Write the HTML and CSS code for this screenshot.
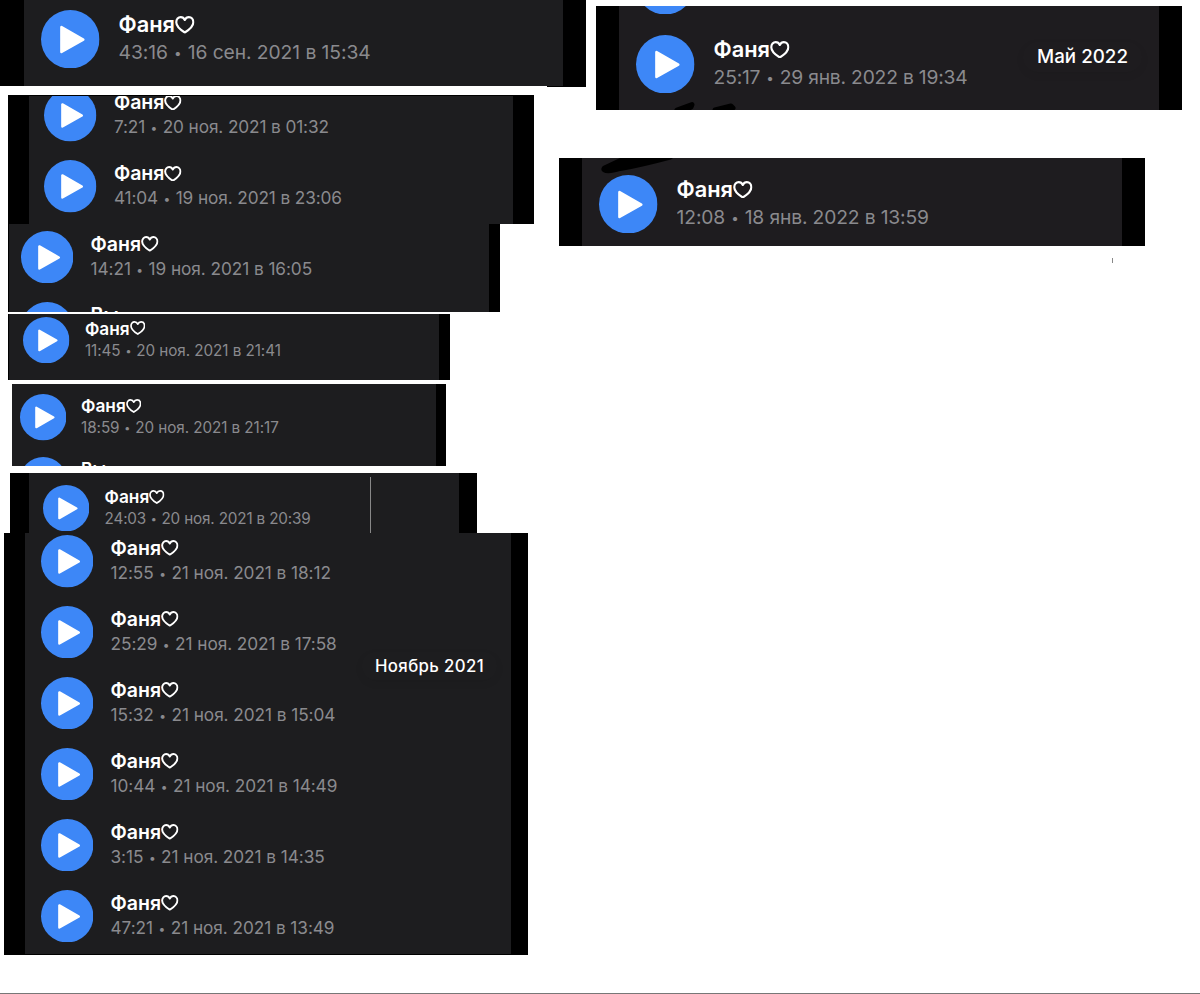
FILE: index.html
```
<!DOCTYPE html>
<html lang="ru">
<head>
    <meta charset="UTF-8">
    <title>Голосовые сообщения</title>
    <link rel="stylesheet" href="styles.css">
</head>
<body>
<svg class="defs">
    <symbol id="play" viewBox="0 0 58 58">
        <circle cx="29" cy="29" r="29" fill="#3d87f7"/>
        <path d="M20.3 17v24.6L41.9 29.3z" fill="#fff" stroke="#fff" stroke-width="2.6" stroke-linejoin="round"/>
    </symbol>
    <symbol id="heart" viewBox="0 0 20 18">
        <path d="M10 16.8C6.5 14.6 1.3 11 1.3 6.3 1.3 3.3 3.3 1.2 5.8 1.2 7.7 1.2 9.2 2.3 10 4 10.8 2.3 12.3 1.2 14.2 1.2 16.7 1.2 18.7 3.3 18.7 6.3 18.7 11 13.5 14.6 10 16.8z" fill="none" stroke="#fff" stroke-width="2.2" stroke-linejoin="round"/>
    </symbol>
</svg>
<div class="col left">
    <div class="panel big sep16">
        <ul>
            <li><svg class="play"><use href="#play"/></svg><div><h3>Фаня<svg class="heart"><use href="#heart"/></svg></h3><p>43:16 <i>•</i> 16 сен. 2021 в 15:34</p></div></li>
        </ul>
    </div>
    <div class="edge"></div>
    <div class="panel mid nov19">
        <ul>
            <li><svg class="play"><use href="#play"/></svg><div><h3>Фаня<svg class="heart"><use href="#heart"/></svg></h3><p>7:21 <i>•</i> 20 ноя. 2021 в 01:32</p></div></li>
            <li><svg class="play"><use href="#play"/></svg><div><h3>Фаня<svg class="heart"><use href="#heart"/></svg></h3><p>41:04 <i>•</i> 19 ноя. 2021 в 23:06</p></div></li>
        </ul>
    </div>
    <div class="panel mid nov19b">
        <ul>
            <li><svg class="play"><use href="#play"/></svg><div><h3>Фаня<svg class="heart"><use href="#heart"/></svg></h3><p>14:21 <i>•</i> 19 ноя. 2021 в 16:05</p></div></li>
            <li><svg class="play"><use href="#play"/></svg><div><h3>Вы</h3><p></p></div></li>
        </ul>
    </div>
    <div class="panel small nov20">
        <ul>
            <li><svg class="play"><use href="#play"/></svg><div><h3>Фаня<svg class="heart"><use href="#heart"/></svg></h3><p>11:45 <i>•</i> 20 ноя. 2021 в 21:41</p></div></li>
            <li><svg class="play"><use href="#play"/></svg></li>
        </ul>
    </div>
    <div class="panel small nov20b">
        <ul>
            <li><svg class="play"><use href="#play"/></svg><div><h3>Фаня<svg class="heart"><use href="#heart"/></svg></h3><p>18:59 <i>•</i> 20 ноя. 2021 в 21:17</p></div></li>
            <li><svg class="play"><use href="#play"/></svg><div><h3>Вы</h3><p></p></div></li>
        </ul>
    </div>
    <div class="panel small nov20c">
        <ul>
            <li><svg class="play"><use href="#play"/></svg><div><h3>Фаня<svg class="heart"><use href="#heart"/></svg></h3><p>24:03 <i>•</i> 20 ноя. 2021 в 20:39</p></div></li>
        </ul>
        <div class="rule"></div>
    </div>
    <div class="panel mid nov21">
        <ul>
            <li><svg class="play"><use href="#play"/></svg><div><h3>Фаня<svg class="heart"><use href="#heart"/></svg></h3><p>12:55 <i>•</i> 21 ноя. 2021 в 18:12</p></div></li>
            <li><svg class="play"><use href="#play"/></svg><div><h3>Фаня<svg class="heart"><use href="#heart"/></svg></h3><p>25:29 <i>•</i> 21 ноя. 2021 в 17:58</p></div></li>
            <li><svg class="play"><use href="#play"/></svg><div><h3>Фаня<svg class="heart"><use href="#heart"/></svg></h3><p>15:32 <i>•</i> 21 ноя. 2021 в 15:04</p></div></li>
            <li><svg class="play"><use href="#play"/></svg><div><h3>Фаня<svg class="heart"><use href="#heart"/></svg></h3><p>10:44 <i>•</i> 21 ноя. 2021 в 14:49</p></div></li>
            <li><svg class="play"><use href="#play"/></svg><div><h3>Фаня<svg class="heart"><use href="#heart"/></svg></h3><p>3:15 <i>•</i> 21 ноя. 2021 в 14:35</p></div></li>
            <li><svg class="play"><use href="#play"/></svg><div><h3>Фаня<svg class="heart"><use href="#heart"/></svg></h3><p>47:21 <i>•</i> 21 ноя. 2021 в 13:49</p></div></li>
        </ul>
        <span class="month">Ноябрь 2021</span>
        <div class="bar"></div>
    </div>
</div>
<div class="col">
    <div class="panel big jan29">
        <ul>
            <li><svg class="play"><use href="#play"/></svg></li>
            <li><svg class="play"><use href="#play"/></svg><div><h3>Фаня<svg class="heart"><use href="#heart"/></svg></h3><p>25:17 <i>•</i> 29 янв. 2022 в 19:34</p></div></li>
        </ul>
        <svg class="pen" viewBox="0 0 90 10"><path d="M8 10L23 4.500L22 7L10 13zM46 10L62 6L64 8L52 12z" fill="#000" stroke="#000" stroke-width="5" stroke-linejoin="round"/></svg>
        <span class="month">Май 2022</span>
        <div class="bar"></div>
    </div>
    <div class="panel big jan18">
        <svg class="pen" viewBox="0 0 90 16"><path d="M5 11L24 2V-2H70Q40 6 20 9.500Q8 13 5 11z" fill="#000" stroke="#000" stroke-width="7" stroke-linejoin="round"/></svg>
        <ul>
            <li><svg class="play"><use href="#play"/></svg><div><h3>Фаня<svg class="heart"><use href="#heart"/></svg></h3><p>12:08 <i>•</i> 18 янв. 2022 в 13:59</p></div></li>
        </ul>
    </div>
    <div class="tick"></div>
</div>
</body>
</html>
```
FILE: styles.css
```
body,div,ul,li,h3,p{margin:0;padding:0;box-sizing:border-box;}
ul{list-style-type:none;}
body{display:flex;height:994px;overflow:hidden;background:#fff;border-bottom:1px solid #777;font-family:Inter,"Noto Sans",sans-serif;}
.defs{position:absolute;width:0;height:0;}
.left{width:596px;flex:none;}

/* all row sizes are in em, the panel sets the scale */
.panel{position:relative;overflow:hidden;background:#1d1d1f;border:0 solid #000;}
.big{font-size:20px;}
.mid{font-size:17.92px;}
.small{font-size:15.87px;}
.panel li{display:flex;align-items:center;height:3.962em;gap:.955em;}
.play{display:block;width:2.925em;height:2.925em;flex:none;}
.panel h3{display:flex;align-items:center;height:1.223em;padding-bottom:.13em;font-size:1.09em;font-weight:600;color:#fff;white-space:nowrap;}
.panel p{height:1.385em;line-height:1.385em;font-size:.963em;letter-spacing:-.07px;color:#8a8a8e;white-space:nowrap;}
.panel p i{font-style:normal;font-size:.7em;line-height:1;margin:0 .06em;vertical-align:.1em;}
.heart{width:.9em;height:.81em;margin:.03em 0 0 0;}

.sep16{width:586px;height:86px;border-width:0 23px 0 24px;padding-left:17px;}
.sep16 ul{margin-top:-.4px;}
.edge{width:39px;height:1px;margin-left:547px;background:#000;}
.nov19{width:526px;height:129px;margin:8px 0 0 8px;border-width:1px 21px 0 21px;padding-left:15.4px;}
.nov19 ul{margin-top:-16px;}
.nov19 p{letter-spacing:-.12px;}
.nov19b{width:492px;height:88px;margin-left:8px;border-width:0 11px 0 1px;padding-left:12px;}
.nov19b ul{margin-top:-2.4px;}
.nov20{width:442px;height:66px;margin:2px 0 0 8px;border-width:0 11px 0 1px;padding-left:14.4px;}
.nov20 ul{margin-top:-5.6px;}
.nov20b{width:434px;height:82px;margin:4px 0 0 12px;border-width:0 10px 0 0;padding-left:7.5px;}
.nov20b ul{margin-top:2px;}
.nov20c{width:467px;height:60px;margin:7px 0 0 10px;border-width:0 18px 0 19px;padding-left:14px;}
.nov20c ul{margin-top:3.6px;}
.nov20c p{letter-spacing:-.17px;}
.nov21{width:524px;height:422px;margin-left:4px;border-width:0 17px 1px 21px;padding-left:16px;}
.nov21 ul{margin-top:-7.2px;}
.jan29{width:586px;height:104px;margin-top:6px;border-width:0 23px 0 23px;padding-left:17px;background:#1e1c1f;}
.jan29 ul{margin-top:-60.8px;}
.jan29 p{letter-spacing:-.2px;}
.jan18{width:586px;height:88px;margin:48px 0 0 -37px;border-width:0 23px 0 23px;padding-left:17px;background:#1e1c1f;}
.jan18 ul{position:relative;margin-top:6.4px;}
.jan18 p{letter-spacing:-.14px;}

/* floating month label and scrollbar over the list */
.month{position:absolute;color:#fff;font-weight:500;white-space:nowrap;border-radius:1.1em;}
.nov21 .month{top:119px;right:14px;padding:4px 13px;font-size:16.8px;line-height:20px;letter-spacing:.37px;box-shadow:0 3px 8px rgba(0,0,0,.06);}
.jan29 .month{top:36px;right:17px;padding:4px 14px;font-size:18.8px;line-height:22px;box-shadow:0 3px 8px rgba(0,0,0,.06);}
.bar{position:absolute;background:#8a8a8a;}
.nov21 .bar{top:104px;right:-17px;width:3px;height:57px;border-radius:2px 0 0 2px;}
.jan29 .bar{top:19px;right:-18px;width:4px;height:64px;border-radius:2px;}
.rule{position:absolute;top:4px;left:341px;width:1px;height:56px;background:#888;}
.pen{position:absolute;}
.jan29 .pen{left:50px;bottom:0;width:90px;height:10px;}
.jan18 .pen{left:18px;top:0;width:90px;height:16px;}
.tick{width:1px;height:5px;margin:12px 0 0 516px;background:#888;}
```
